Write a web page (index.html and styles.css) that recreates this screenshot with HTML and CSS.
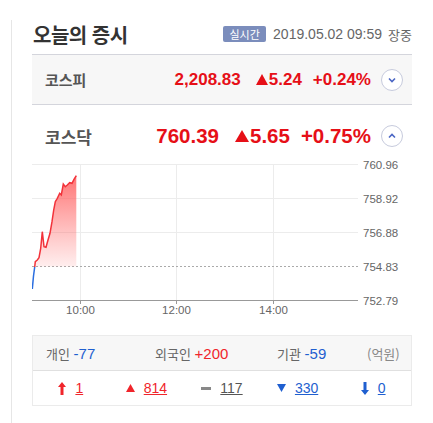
FILE: index.html
```html
<!DOCTYPE html>
<html lang="ko">
<head>
  <meta charset="UTF-8" />
  <meta name="viewport" content="width=device-width, initial-scale=1" />
  <title>오늘의 증시</title>
  <link rel="stylesheet" href="styles.css">
</head>
<body>
  <div class="wrap">
    <div class="market">
      <div class="head">
        <h2>오늘의 증시</h2>
        <div class="stamp">
          <span class="badge">실시간</span>
          <span class="date">2019.05.02 09:59</span>
          <span class="state">장중</span>
        </div>
      </div>

      <div class="index closed">
        <span class="name">코스피</span>
        <span class="val">2,208.83</span>
        <span class="chg"><i class="tri"></i>5.24</span>
        <span class="rate">+0.24%</span>
        <span class="toggle">
          <svg width="10" height="6" viewBox="0 0 10 6"><path d="M2 1.5 L5 4.5 L8 1.5" fill="none" stroke="#4a66c4" stroke-width="1.6"/></svg>
        </span>
      </div>

      <div class="index open">
        <span class="name">코스닥</span>
        <span class="val">760.39</span>
        <span class="chg"><i class="tri"></i>5.65</span>
        <span class="rate">+0.75%</span>
        <span class="toggle">
          <svg width="10" height="6" viewBox="0 0 10 6"><path d="M2 4.5 L5 1.5 L8 4.5" fill="none" stroke="#4a66c4" stroke-width="1.6"/></svg>
        </span>
      </div>

      <svg class="chart" width="380" height="167" viewBox="32 155 380 167">
        <defs>
          <linearGradient id="fill" x1="0" y1="0" x2="0" y2="1">
            <stop offset="0" stop-color="#ff5a5a" stop-opacity="0.85"/>
            <stop offset="1" stop-color="#ff7070" stop-opacity="0.12"/>
          </linearGradient>
        </defs>
        <g stroke="#ececec" stroke-width="1">
          <line x1="32" y1="164.5" x2="358" y2="164.5"/>
          <line x1="32" y1="198.5" x2="358" y2="198.5"/>
          <line x1="32" y1="232.5" x2="358" y2="232.5"/>
          <line x1="80.5" y1="164" x2="80.5" y2="300"/>
          <line x1="176.5" y1="164" x2="176.5" y2="300"/>
          <line x1="273.5" y1="164" x2="273.5" y2="300"/>
        </g>
        <line x1="32" y1="266.5" x2="358" y2="266.5" stroke="#aaa" stroke-width="1" stroke-dasharray="2 2"/>
        <line x1="32" y1="300.5" x2="358" y2="300.5" stroke="#999" stroke-width="1"/>
        <g stroke="#999" stroke-width="1">
          <line x1="80.5" y1="300" x2="80.5" y2="304"/>
          <line x1="176.5" y1="300" x2="176.5" y2="304"/>
          <line x1="273.5" y1="300" x2="273.5" y2="304"/>
        </g>
        <path d="M34.7 266.5 L35.3 261.7 L37.3 260 L39 257.7 L40.7 248.3 L42.3 231.7 L44 246.7 L46 247.3 L48 240 L50 233.3 L52 221.7 L53.7 210 L55.3 201.7 L57.3 198.3 L59.7 193.3 L61.3 195 L63.3 184 L65.3 186.7 L67.3 185 L69.7 182.7 L72 183.3 L74 179.3 L76.3 175.7 L76.3 266.5 Z" fill="url(#fill)"/>
        <path d="M32.3 289 L33.5 276 L34.7 267" fill="none" stroke="#2a6ee0" stroke-width="1.5"/>
        <path d="M34.7 267 L35.3 261.7 L37.3 260 L39 257.7 L40.7 248.3 L42.3 231.7 L44 246.7 L46 247.3 L48 240 L50 233.3 L52 221.7 L53.7 210 L55.3 201.7 L57.3 198.3 L59.7 193.3 L61.3 195 L63.3 184 L65.3 186.7 L67.3 185 L69.7 182.7 L72 183.3 L74 179.3 L76.3 175.7" fill="none" stroke="#f2323a" stroke-width="1.5"/>
        <g class="ylab">
          <text x="363" y="168.5">760.96</text>
          <text x="363" y="202.5">758.92</text>
          <text x="363" y="236.5">756.88</text>
          <text x="363" y="270.5">754.83</text>
          <text x="363" y="304.5">752.79</text>
        </g>
        <g class="xlab">
          <text x="80.5" y="314">10:00</text>
          <text x="176.5" y="314">12:00</text>
          <text x="273.5" y="314">14:00</text>
        </g>
      </svg>

      <div class="trade">
        <div class="investors">
          <span class="who">개인 <b class="down">-77</b></span>
          <span class="who">외국인 <b class="up">+200</b></span>
          <span class="who">기관 <b class="down">-59</b></span>
          <span class="unit">(억원)</span>
        </div>
        <div class="breadth">
          <span class="cell up">
            <svg width="8" height="13" viewBox="0 0 8 13"><path d="M4 0 L8 5 L5.5 5 L5.5 13 L2.5 13 L2.5 5 L0 5 Z" fill="#f0252b"/></svg>
            <a href="#">1</a>
          </span>
          <span class="cell up">
            <svg width="9" height="8" viewBox="0 0 9 8"><path d="M4.5 0 L9 8 L0 8 Z" fill="#f0252b"/></svg>
            <a href="#">814</a>
          </span>
          <span class="cell flat">
            <svg width="10" height="3" viewBox="0 0 10 3"><rect width="10" height="3" fill="#888"/></svg>
            <a href="#">117</a>
          </span>
          <span class="cell down">
            <svg width="9" height="8" viewBox="0 0 9 8"><path d="M0 0 L9 0 L4.5 8 Z" fill="#1f5fd0"/></svg>
            <a href="#">330</a>
          </span>
          <span class="cell down">
            <svg width="8" height="13" viewBox="0 0 8 13"><path d="M2.5 0 L5.5 0 L5.5 8 L8 8 L4 13 L0 8 L2.5 8 Z" fill="#1f5fd0"/></svg>
            <a href="#">0</a>
          </span>
        </div>
      </div>
    </div>
  </div>
</body>
</html>
```

FILE: styles.css
```css
body {
  margin: 0;
  background: #fff;
  font-family: "Liberation Sans", "Noto Sans CJK KR", sans-serif;
  color: #333;
}

.wrap {
  margin: 20px 0 0 11px;
  padding-left: 20px;
  border-left: 1px solid #e6e6e6;
  height: 403px;
}

.market {
  width: 380px;
}

.head {
  display: flex;
  align-items: center;
  justify-content: space-between;
  height: 34px;
  border-bottom: 1px solid #d4d5dc;
}

.head h2 {
  margin: 0 0 0 1px;
  font-family: "Noto Sans CJK KR", sans-serif;
  font-size: 20px;
  font-weight: 700;
  letter-spacing: -0.5px;
  color: #333;
  position: relative;
  top: -3px;
}

.stamp {
  display: flex;
  align-items: center;
  position: relative;
  top: -3px;
  color: #666;
}

.badge {
  display: inline-block;
  width: 43px;
  height: 16px;
  line-height: 16px;
  text-align: center;
  background: #7b8dbc;
  color: #fff;
  font-family: "Noto Sans CJK KR", sans-serif;
  font-size: 11px;
  border-radius: 2px;
  margin-right: 7px;
}

.date {
  font-size: 14px;
}

.state {
  margin-left: 6px;
  font-family: "Noto Sans CJK KR", sans-serif;
  font-size: 13px;
}

.index {
  display: flex;
  align-items: center;
  padding: 0 9px 0 13px;
  color: #e60f17;
  font-weight: 700;
}

.index.closed {
  height: 49px;
  background: #f7f7f7;
  border-bottom: 1px solid #d4d5dc;
  font-size: 17px;
}

.index.open {
  height: 38px;
  padding-top: 12px;
  font-size: 20.5px;
}

.index .name {
  font-family: "Noto Sans CJK KR", sans-serif;
  font-size: 15px;
  color: #555;
  margin-right: auto;
}

.index.open .name {
  font-size: 17px;
}

.chg {
  margin-left: 15px;
  display: inline-flex;
  align-items: center;
}

.open .chg {
  margin-left: 16px;
}

.tri {
  display: inline-block;
  width: 0;
  height: 0;
  border-left: 6px solid transparent;
  border-right: 6px solid transparent;
  border-bottom: 11px solid #e60f17;
  margin-right: 1px;
}

.open .tri {
  border-left-width: 7px;
  border-right-width: 7px;
  border-bottom-width: 12px;
}

.rate {
  margin-left: 11px;
}

.toggle {
  display: flex;
  align-items: center;
  justify-content: center;
  width: 20px;
  height: 20px;
  margin-left: 10px;
  border: 1px solid #c7cbdd;
  border-radius: 50%;
  background: #fff;
}

.chart {
  display: block;
}

.ylab text {
  font-family: "Liberation Sans", sans-serif;
  font-size: 11.5px;
  fill: #666;
}

.xlab text {
  font-family: "Liberation Sans", sans-serif;
  font-size: 11.5px;
  fill: #666;
  text-anchor: middle;
}

.trade {
  margin-top: 13px;
  border: 1px solid #ebebeb;
}

.investors {
  display: grid;
  grid-template-columns: 109px 122px 90px auto;
  align-items: center;
  height: 34px;
  padding-left: 13px;
  background: #f7f7f7;
  border-bottom: 1px solid #e0e0e0;
  font-family: "Noto Sans CJK KR", sans-serif;
  font-size: 13px;
  color: #666;
}

.investors b {
  font-family: "Liberation Sans", sans-serif;
  font-weight: 400;
  font-size: 15px;
}

.up {
  color: #f0252b;
}

.down {
  color: #1f5fd0;
}

.unit {
  color: #888;
}

.breadth {
  display: grid;
  grid-template-columns: repeat(5, 1fr);
  height: 34px;
  align-items: center;
}

.cell {
  display: flex;
  align-items: center;
  justify-content: center;
  gap: 9px;
  font-size: 14px;
}

.cell a {
  color: inherit;
  text-decoration: underline;
}

.flat {
  color: #555;
}
```
